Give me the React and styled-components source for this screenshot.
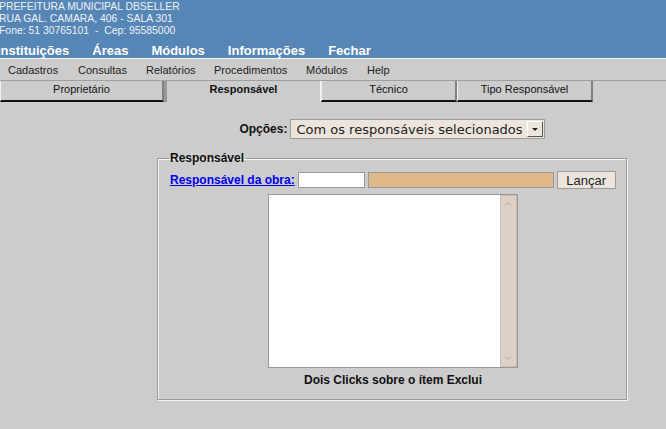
import styled, { createGlobalStyle } from 'styled-components'

const GlobalStyle = createGlobalStyle`
  html, body {
    margin: 0;
    padding: 0;
    background: #cccccc;
    font-family: "Liberation Sans", Arial, sans-serif;
    overflow: hidden;
  }
`

const Page = styled.div`
  width: 666px;
  height: 429px;
  background: #cccccc;
`

const Header = styled.header`
  background: #5586b5;
  height: 58px;
  border-bottom: 1px solid #f4f4f4;
  overflow: hidden;
`

const Address = styled.div`
  margin: 1px 0 0 -1px;
  font-size: 10.4px;
  line-height: 12px;
  color: #eef2f7;
  white-space: nowrap;
`

const MainMenu = styled.nav`
  display: flex;
  gap: 23px;
  margin: 6px 0 0 -3px;
  font-size: 13px;
  font-weight: bold;
  color: #ffffff;
  line-height: 16px;
`

const SubMenu = styled.nav`
  display: flex;
  height: 21px;
  align-items: center;
  padding-left: 8px;
  font-size: 11px;
  color: #222222;
  border-bottom: 1px solid #a0a0a0;
`

const SubItem = styled.span`
  width: ${p => p.w}px;
`

const Tabs = styled.div`
  display: flex;
  height: 21px;
`

const Tab = styled.div`
  width: ${p => p.w}px;
  box-sizing: border-box;
  text-align: center;
  font-size: 11px;
  line-height: 16px;
  color: #111;
  font-weight: ${p => (p.active ? 'bold' : 'normal')};
  border-left: ${p => (p.dark ? '3px solid #999' : '1px solid #f0f0f0')};
  border-right: ${p => (p.active ? '1px solid #f0f0f0' : '2px solid #808080')};
  border-bottom: ${p => (p.active ? 'none' : '2px solid #111')};
`

const Content = styled.div`
  margin-left: 157px;
  width: 470px;
`

const OptionsRow = styled.div`
  display: flex;
  align-items: center;
  justify-content: center;
  gap: 3px;
  margin-top: 17px;
`

const Label = styled.span`
  font-size: 12px;
  font-weight: bold;
  color: #111;
`

const Select = styled.div`
  display: flex;
  align-items: center;
  height: 20px;
  box-sizing: border-box;
  border: 1px solid #a09a94;
  background: #ece5de;
  padding-left: 5px;
  font-family: "DejaVu Sans", sans-serif;
  font-size: 13px;
  color: #222;
`

const Arrow = styled.span`
  width: 16px;
  height: 16px;
  margin: 0 1px 0 4px;
  box-sizing: border-box;
  background: #ece5de;
  border: 1px solid #fff;
  border-right-color: #555;
  border-bottom-color: #555;
  display: flex;
  align-items: center;
  justify-content: center;
  &::after {
    content: '';
    border-left: 3px solid transparent;
    border-right: 3px solid transparent;
    border-top: 3px solid #222;
  }
`

const Fieldset = styled.fieldset`
  margin: 12px 0 0 0;
  padding: 6px 10px 12px 12px;
  border: 1px solid #999;
  box-shadow: inset 1px 1px #f4f4f4, 1px 1px #f4f4f4;
  box-sizing: border-box;
  min-width: 0;
`

const Legend = styled.legend`
  padding: 0 2px 0 1px;
  margin-left: -1px;
  font-size: 12px;
  font-weight: bold;
  color: #111;
`

const InputRow = styled.div`
  display: flex;
  align-items: center;
  gap: 3px;
`

const Link = styled.a`
  flex-shrink: 0;
  white-space: nowrap;
  font-size: 12px;
  font-weight: bold;
  color: #0000ee;
  text-decoration: underline;
`

const TextInput = styled.div`
  flex-shrink: 0;
  width: ${p => p.w}px;
  height: 16px;
  box-sizing: border-box;
  border: 1px solid #999;
  background: ${p => p.bg};
`

const Button = styled.button`
  flex-shrink: 0;
  height: 18px;
  width: 59px;
  padding: 0;
  box-sizing: border-box;
  border: 1px solid #a09a94;
  background: #ece5de;
  font-family: "Liberation Sans", Arial, sans-serif;
  font-size: 13px;
  color: #222;
`

const ListBox = styled.div`
  display: flex;
  width: 250px;
  height: 174px;
  margin: 5px auto 0;
  box-sizing: border-box;
  border: 1px solid #999;
  background: #fff;
  justify-content: flex-end;
`

const ScrollBar = styled.div`
  width: 17px;
  box-sizing: border-box;
  background: #dbd1c8;
  border: 1px solid #c8bdb2;
  display: flex;
  flex-direction: column;
  justify-content: space-between;
  align-items: center;
  padding: 6px 0;
`

const Hint = styled.div`
  text-align: center;
  font-size: 12px;
  font-weight: bold;
  color: #111;
  margin-top: 5px;
`

const Chevron = ({ up }) => (
  <svg width="7" height="4" viewBox="0 0 7 4">
    <path
      d={up ? 'M0.5 3.5 L3.5 0.5 L6.5 3.5' : 'M0.5 0.5 L3.5 3.5 L6.5 0.5'}
      fill="none"
      stroke="#b5aaa0"
      strokeWidth="1"
    />
  </svg>
)

export default function App() {
  const sub = [
    ['Cadastros', 70],
    ['Consultas', 68],
    ['Relatórios', 68],
    ['Procedimentos', 92],
    ['Módulos', 61],
    ['Help', 40],
  ]
  return (
    <Page>
      <GlobalStyle />
      <Header>
        <Address>
          <div>PREFEITURA MUNICIPAL DBSELLER</div>
          <div>RUA GAL. CAMARA, 406 - SALA 301</div>
          <div>Fone: 51 30765101&nbsp; -&nbsp; Cep: 95585000</div>
        </Address>
        <MainMenu>
          <span>Instituições</span>
          <span>Áreas</span>
          <span>Módulos</span>
          <span>Informações</span>
          <span>Fechar</span>
        </MainMenu>
      </Header>
      <SubMenu>
        {sub.map(([t, w]) => (
          <SubItem key={t} w={w}>{t}</SubItem>
        ))}
      </SubMenu>
      <Tabs>
        <Tab w={164}>Proprietário</Tab>
        <Tab w={157} active dark>Responsável</Tab>
        <Tab w={136}>Técnico</Tab>
        <Tab w={136}>Tipo Responsável</Tab>
      </Tabs>
      <Content>
        <OptionsRow>
          <Label>Opções:</Label>
          <Select>
            Com os responsáveis selecionados
            <Arrow />
          </Select>
        </OptionsRow>
        <Fieldset>
          <Legend>Responsável</Legend>
          <InputRow>
            <Link href="#">Responsável da obra:</Link>
            <TextInput w={67} bg="#ffffff" />
            <TextInput w={186} bg="#deb887" />
            <Button>Lançar</Button>
          </InputRow>
          <ListBox>
            <ScrollBar>
              <Chevron up />
              <Chevron />
            </ScrollBar>
          </ListBox>
          <Hint>Dois Clicks sobre o ítem Exclui</Hint>
        </Fieldset>
      </Content>
    </Page>
  )
}
